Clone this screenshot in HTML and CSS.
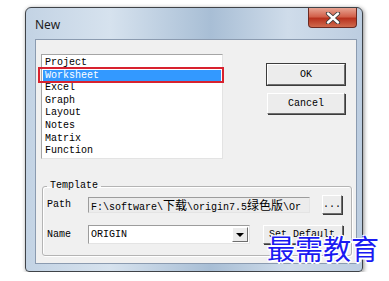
FILE: index.html
```html
<!DOCTYPE html>
<html lang="en">
<head>
    <meta charset="UTF-8">
    <meta name="viewport" content="width=device-width, initial-scale=1.0">
    <title>New</title>
    <link rel="stylesheet" href="styles.css">
</head>
<body>
    <div class="window">
        <div class="titlebar">
            <span class="title">New</span>
            <div class="close">
                <svg width="16" height="12" viewBox="0 0 16 12">
                    <path d="M3 1.5 L13 10.5 M13 1.5 L3 10.5" stroke="#3a3a3a" stroke-width="4.2" stroke-linecap="round"/>
                    <path d="M3 1.5 L13 10.5 M13 1.5 L3 10.5" stroke="#fff" stroke-width="2.4" stroke-linecap="round"/>
                </svg>
            </div>
        </div>
        <div class="client">
            <div class="top">
                <ul class="list">
                    <li>Project</li>
                    <li class="selected">Worksheet</li>
                    <li>Excel</li>
                    <li>Graph</li>
                    <li>Layout</li>
                    <li>Notes</li>
                    <li>Matrix</li>
                    <li>Function</li>
                </ul>
                <div class="actions">
                    <button class="btn default">OK</button>
                    <button class="btn">Cancel</button>
                </div>
            </div>
            <fieldset class="group">
                <legend>Template</legend>
                <div class="row">
                    <span class="label">Path</span>
                    <div class="field path">F:\software\<span class="cjk">下载</span>\origin7.5<span class="cjk">绿色版</span>\Or</div>
                    <button class="btn dots">...</button>
                </div>
                <div class="row">
                    <span class="label">Name</span>
                    <div class="combo">
                        <span class="combo-text">ORIGIN</span>
                        <span class="arrow"></span>
                    </div>
                    <button class="btn setdef">Set Default</button>
                </div>
            </fieldset>
        </div>
    </div>

    <div class="highlight-box"></div>
    <div class="watermark">最需教育</div>
</body>
</html>
```

FILE: styles.css
```css
body {
    margin: 0;
    padding: 0;
    background-color: #fff;
    font-family: "Liberation Mono", "Noto Sans CJK SC", monospace;
    font-size: 10px;
    color: #000;
}

.window {
    position: relative;
    width: 338px;
    height: 265px;
    margin: 7px 0 0 25px;
    box-sizing: border-box;
    border: 1px solid #3f4348;
    border-radius: 6px 6px 4px 4px;
    padding: 0 5px 7px 9px;
    background: linear-gradient(90deg, #c3d3e4 0%, #d6e2ee 25%, #a8bed5 55%, #cfdcea 78%, #bccde0 100%);
    box-shadow: 1px 1px 4px rgba(0, 0, 0, 0.45);
}

.titlebar {
    height: 31px;
    display: flex;
    align-items: center;
    justify-content: space-between;
}

.title {
    font-family: "Noto Sans", sans-serif;
    font-size: 12px;
    color: #1c1c1c;
    margin-top: 1px;
}

.close {
    align-self: flex-start;
    width: 49px;
    height: 20px;
    box-sizing: border-box;
    border: 1px solid #6b2a22;
    border-top: none;
    border-radius: 0 0 4px 4px;
    background: linear-gradient(180deg, #e8a493 0%, #d2614b 45%, #b8321e 55%, #cf6a4d 100%);
    display: flex;
    align-items: center;
    justify-content: center;
}

.client {
    height: 225px;
    box-sizing: border-box;
    border: 1px solid #8b9bb0;
    background-color: #f0f0f0;
    padding: 14px 0 0 5px;
}

.top {
    display: flex;
    align-items: flex-start;
}

.list {
    list-style: none;
    margin: 0;
    width: 182px;
    height: 105px;
    box-sizing: border-box;
    padding: 2px 1px 0 1px;
    background-color: #fff;
    border: 1px solid #a5a5a5;
    border-right-color: #e3e3e3;
    border-bottom-color: #e3e3e3;
    overflow: hidden;
}

.list li {
    height: 12.6px;
    line-height: 12.6px;
    padding-left: 2px;
    white-space: nowrap;
}

.list li.selected {
    background-color: #3399ff;
    color: #fff;
}

.actions {
    display: flex;
    flex-direction: column;
    gap: 8px;
    margin: 10px 0 0 44px;
}

.btn {
    font-family: "Liberation Mono", monospace;
    font-size: 10px;
    color: #000;
    padding: 0;
    background-color: #ececec;
    border: 1px solid;
    border-color: #fff #6e6e6e #6e6e6e #fff;
    box-shadow: 1px 1px 0 #3c3c3c;
    cursor: pointer;
    white-space: nowrap;
    overflow: hidden;
}

.actions .btn {
    width: 78px;
    height: 21px;
}

.btn.default {
    outline: 1px solid #3c3c3c;
    box-shadow: none;
}

.group {
    width: 310px;
    box-sizing: border-box;
    margin: 21px 0 0 1px;
    padding: 0 6px 11px 4px;
    border: 1px solid #b4b4b4;
    border-radius: 3px;
    box-shadow: inset 1px 1px 0 #fff, 1px 1px 0 #fff;
}

.group legend {
    padding: 0 3px;
    line-height: 12px;
}

.row {
    display: flex;
    align-items: center;
    height: 19px;
}

.row + .row {
    margin-top: 11px;
}

.row:first-of-type {
    margin-top: 3px;
}

.label {
    width: 41px;
}

.field {
    height: 16px;
    box-sizing: border-box;
    line-height: 14px;
    padding-left: 2px;
    border: 1px solid;
    border-color: #9c9c9c #e4e4e4 #e4e4e4 #9c9c9c;
    white-space: nowrap;
    overflow: hidden;
}

.path {
    width: 222px;
    background-color: #ececec;
}

.cjk {
    font-family: "Noto Sans CJK SC", sans-serif;
    font-size: 12px;
}

.btn.dots {
    width: 20px;
    height: 19px;
    margin-left: 12px;
}

.combo {
    width: 162px;
    height: 19px;
    box-sizing: border-box;
    border: 1px solid;
    border-color: #9c9c9c #e4e4e4 #e4e4e4 #9c9c9c;
    background-color: #fff;
    display: flex;
    align-items: center;
    justify-content: space-between;
}

.combo-text {
    padding-left: 2px;
}

.arrow {
    width: 16px;
    height: 15px;
    margin-right: 1px;
    box-sizing: border-box;
    background-color: #ececec;
    border: 1px solid;
    border-color: #fff #6e6e6e #6e6e6e #fff;
    position: relative;
}

.arrow::after {
    content: "";
    position: absolute;
    left: 3px;
    top: 5px;
    border-left: 4px solid transparent;
    border-right: 4px solid transparent;
    border-top: 4px solid #000;
}

.btn.setdef {
    width: 80px;
    height: 19px;
    margin-left: 13px;
    text-align: left;
    padding-left: 5px;
}

.highlight-box {
    position: absolute;
    left: 38px;
    top: 67px;
    width: 186px;
    height: 16px;
    box-sizing: border-box;
    border: 2px solid #d8222f;
}

.watermark {
    position: absolute;
    left: 267px;
    top: 228px;
    font-family: "Noto Sans CJK SC", sans-serif;
    font-size: 28px;
    line-height: 40px;
    color: #1a1af2;
    text-shadow: -1px -1px 0 #fff, 1px -1px 0 #fff, -1px 1px 0 #fff, 1px 1px 0 #fff, 0 2px 0 #fff, 2px 0 0 #fff;
}
```
